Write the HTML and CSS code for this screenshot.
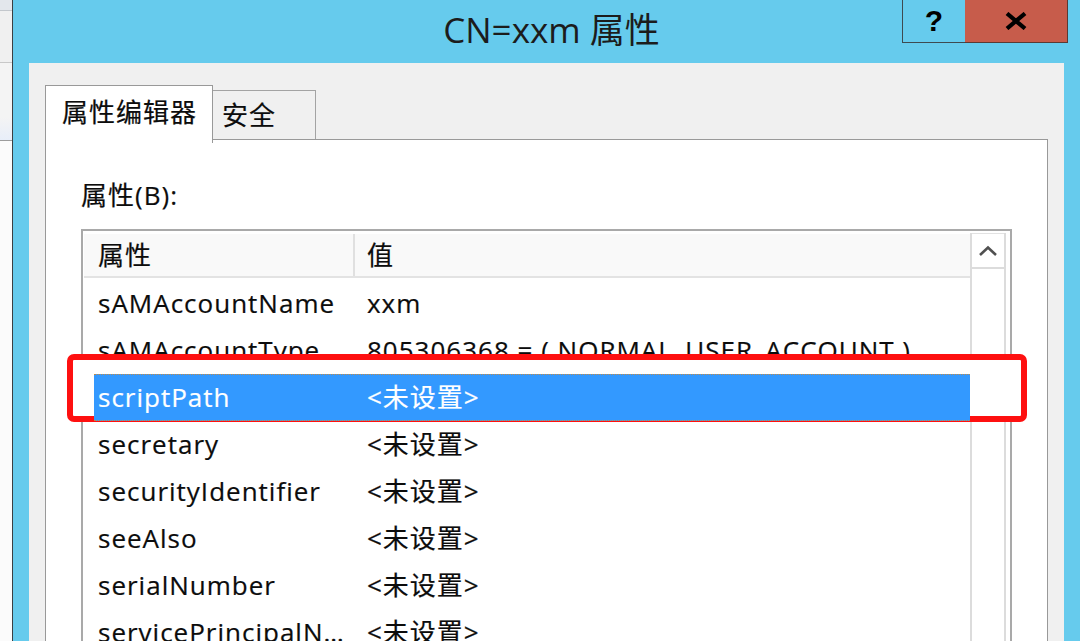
FILE: index.html
```html
<!DOCTYPE html>
<html lang="zh-CN">
<head>
<meta charset="utf-8">
<title>CN=xxm 属性</title>
<link rel="stylesheet" href="styles.css">
</head>
<body>
<div class="screen">
  <div class="bgwin">
    <div class="bg-a"></div>
    <div class="bg-b"></div>
    <div class="bg-c"></div>
    <div class="bg-d"></div>
  </div>
  <div class="win">
    <div class="titlebar">
      <div class="title">CN=xxm 属性</div>
      <div class="caption-btns">
        <div class="btn-help">?</div>
        <div class="btn-close">
          <svg width="22" height="18" viewBox="0 0 22 18"><path d="M2 1.5 L20 16.5 M20 1.5 L2 16.5" stroke="#000" stroke-width="4.2" fill="none"/></svg>
        </div>
      </div>
    </div>
    <div class="body">
      <div class="tabs">
        <div class="tab tab-active">属性编辑器</div>
        <div class="tab tab-inactive">安全</div>
      </div>
      <div class="panel">
        <div class="label">属性(B):</div>
        <div class="list">
          <div class="list-main">
            <div class="header">
              <div class="hcell">属性</div>
              <div class="hdiv"></div>
              <div class="hcell hcell-val">值</div>
            </div>
            <div class="rows">
              <div class="row"><span class="cell">sAMAccountName</span><span class="cell">xxm</span></div>
              <div class="row"><span class="cell">sAMAccountType</span><span class="cell">805306368 = ( NORMAL_USER_ACCOUNT )</span></div>
              <div class="row row-selected"><span class="cell">scriptPath</span><span class="cell">&lt;未设置&gt;</span></div>
              <div class="row"><span class="cell">secretary</span><span class="cell">&lt;未设置&gt;</span></div>
              <div class="row"><span class="cell">securityIdentifier</span><span class="cell">&lt;未设置&gt;</span></div>
              <div class="row"><span class="cell">seeAlso</span><span class="cell">&lt;未设置&gt;</span></div>
              <div class="row"><span class="cell">serialNumber</span><span class="cell">&lt;未设置&gt;</span></div>
              <div class="row"><span class="cell">servicePrincipalN…</span><span class="cell">&lt;未设置&gt;</span></div>
            </div>
          </div>
          <div class="scrollbar">
            <div class="scroll-up">
              <svg width="20" height="12" viewBox="0 0 20 12"><path d="M2 10 L10 2.5 L18 10" stroke="#505050" stroke-width="2.6" fill="none"/></svg>
            </div>
          </div>
          <div class="highlight-box"></div>
        </div>
      </div>
    </div>
  </div>
</div>
</body>
</html>
```

FILE: styles.css
```css
* { box-sizing: border-box; }
html, body {
  margin: 0;
  padding: 0;
  width: 1080px;
  height: 641px;
  overflow: hidden;
  background: #ffffff;
}
body {
  font-family: "Open Sans", "Noto Sans CJK SC", sans-serif;
  color: #0c0c0c;
}
.screen {
  display: flex;
  width: 1080px;
  height: 641px;
  overflow: hidden;
}
.bgwin {
  width: 12px;
  display: flex;
  flex-direction: column;
}
.bg-a { height: 11px; background: #e3e7ec; border-bottom: 1px solid #c3c7cc; }
.bg-b { height: 52px; background: #f0f0f0; border-bottom: 1px solid #c8c8c8; }
.bg-c { height: 78px; background: linear-gradient(#f4f4f4 70%, #e8eef9); border-bottom: 1px solid #9c9c9c; }
.bg-d { flex: 1; background: #fbfbfb; }

.win {
  flex: 1;
  display: flex;
  flex-direction: column;
  background: #66cbed;
  border-left: 1px solid #3b3f42;
}
.titlebar {
  height: 63px;
  flex: none;
  display: grid;
  grid-template-columns: 1fr auto 1fr;
}
.title {
  grid-column: 2;
  font-size: 35px;
  line-height: 60px;
  color: #1c1c1c;
  white-space: nowrap;
  padding-left: 10px;
}
.caption-btns {
  grid-column: 3;
  justify-self: end;
  display: flex;
  height: 43px;
  margin-right: 12px;
}
.btn-help {
  width: 63px;
  height: 43px;
  border-left: 1px solid #3e4a50;
  border-bottom: 1px solid #3e4a50;
  font-family: "Liberation Sans", sans-serif;
  font-weight: bold;
  font-size: 30px;
  line-height: 42px;
  text-align: center;
  color: #000;
}
.btn-close {
  width: 103px;
  height: 43px;
  background: #c75c4b;
  border-right: 1px solid #5a3a34;
  border-bottom: 1px solid #5a3a34;
  display: flex;
  align-items: center;
  justify-content: center;
  padding-bottom: 1px;
}
.body {
  flex: 1;
  margin: 0 16px;
  background: #f0f0f0;
  padding: 22px 16px 0;
  display: flex;
  flex-direction: column;
  min-height: 0;
}
.tabs {
  display: flex;
  align-items: flex-end;
  height: 54px;
  flex: none;
  font-size: 26px;
  letter-spacing: 1px;
}
.tab {
  white-space: nowrap;
  -webkit-text-stroke: 0.2px #0c0c0c;
}
.tab-active {
  position: relative;
  z-index: 1;
  width: 168px;
  height: 58px;
  margin-bottom: -4px;
  background: #fff;
  border: 1px solid #999;
  border-bottom: none;
  padding-left: 16px;
  line-height: 52px;
}
.tab-inactive {
  width: 103px;
  height: 49px;
  background: #f0f0f0;
  border: 1px solid #a3a3a3;
  border-left: none;
  border-bottom: none;
  padding-left: 9px;
  line-height: 48px;
}
.panel {
  flex: 1;
  background: #fff;
  border: 1px solid #999;
  border-bottom: none;
  padding: 38px 35px 0;
}
.label {
  font-size: 26px;
  letter-spacing: 1px;
  line-height: 34px;
  margin-bottom: 17px;
  -webkit-text-stroke: 0.2px #0c0c0c;
}
.list {
  position: relative;
  display: flex;
  height: 420px;
  border: 2px solid #a9a9a9;
  border-bottom: none;
  padding: 2px 4px 0 1px;
  font-size: 26px;
  letter-spacing: 1px;
}
.list-main {
  flex: 1;
  display: flex;
  flex-direction: column;
}
.header {
  height: 45px;
  display: flex;
  background: #f9f9f9;
  border-top: 1px solid #ffffff;
  border-bottom: 2px solid #e3e3e3;
  line-height: 42px;
  -webkit-text-stroke: 0.2px #0c0c0c;
}
.hcell {
  width: 269px;
  padding-left: 14px;
}
.hdiv {
  width: 2px;
  background: #e0e0e0;
}
.hcell-val {
  flex: 1;
  padding-left: 12px;
}
.rows {
  margin-top: 2px;
}
.row {
  margin-left: 10px;
  height: 47px;
  line-height: 47px;
  display: grid;
  grid-template-columns: 269px 1fr;
  white-space: nowrap;
  -webkit-text-stroke: 0.2px #0c0c0c;
}
.cell {
  padding-left: 4px;
  overflow: hidden;
}
.row-selected {
  position: relative;
  z-index: 2;
  background: #3399ff;
  color: #fff;
  -webkit-text-stroke: 0.2px #ffffff;
  border-top: 1px dotted #c08a48;
  border-bottom: 1px dotted #c08a48;
  line-height: 45px;
}
.scrollbar {
  width: 36px;
  border-left: 2px solid #dcdcdc;
  border-right: 2px solid #dcdcdc;
}
.scroll-up {
  height: 36px;
  border-top: 1px solid #e2e2e2;
  border-bottom: 2px solid #dcdcdc;
  display: flex;
  align-items: center;
  justify-content: center;
}
.highlight-box {
  position: absolute;
  z-index: 1;
  left: -16px;
  top: 123px;
  width: 960px;
  height: 68px;
  border: 6px solid #fe1010;
  border-radius: 7px;
  background: #fff;
}
```
